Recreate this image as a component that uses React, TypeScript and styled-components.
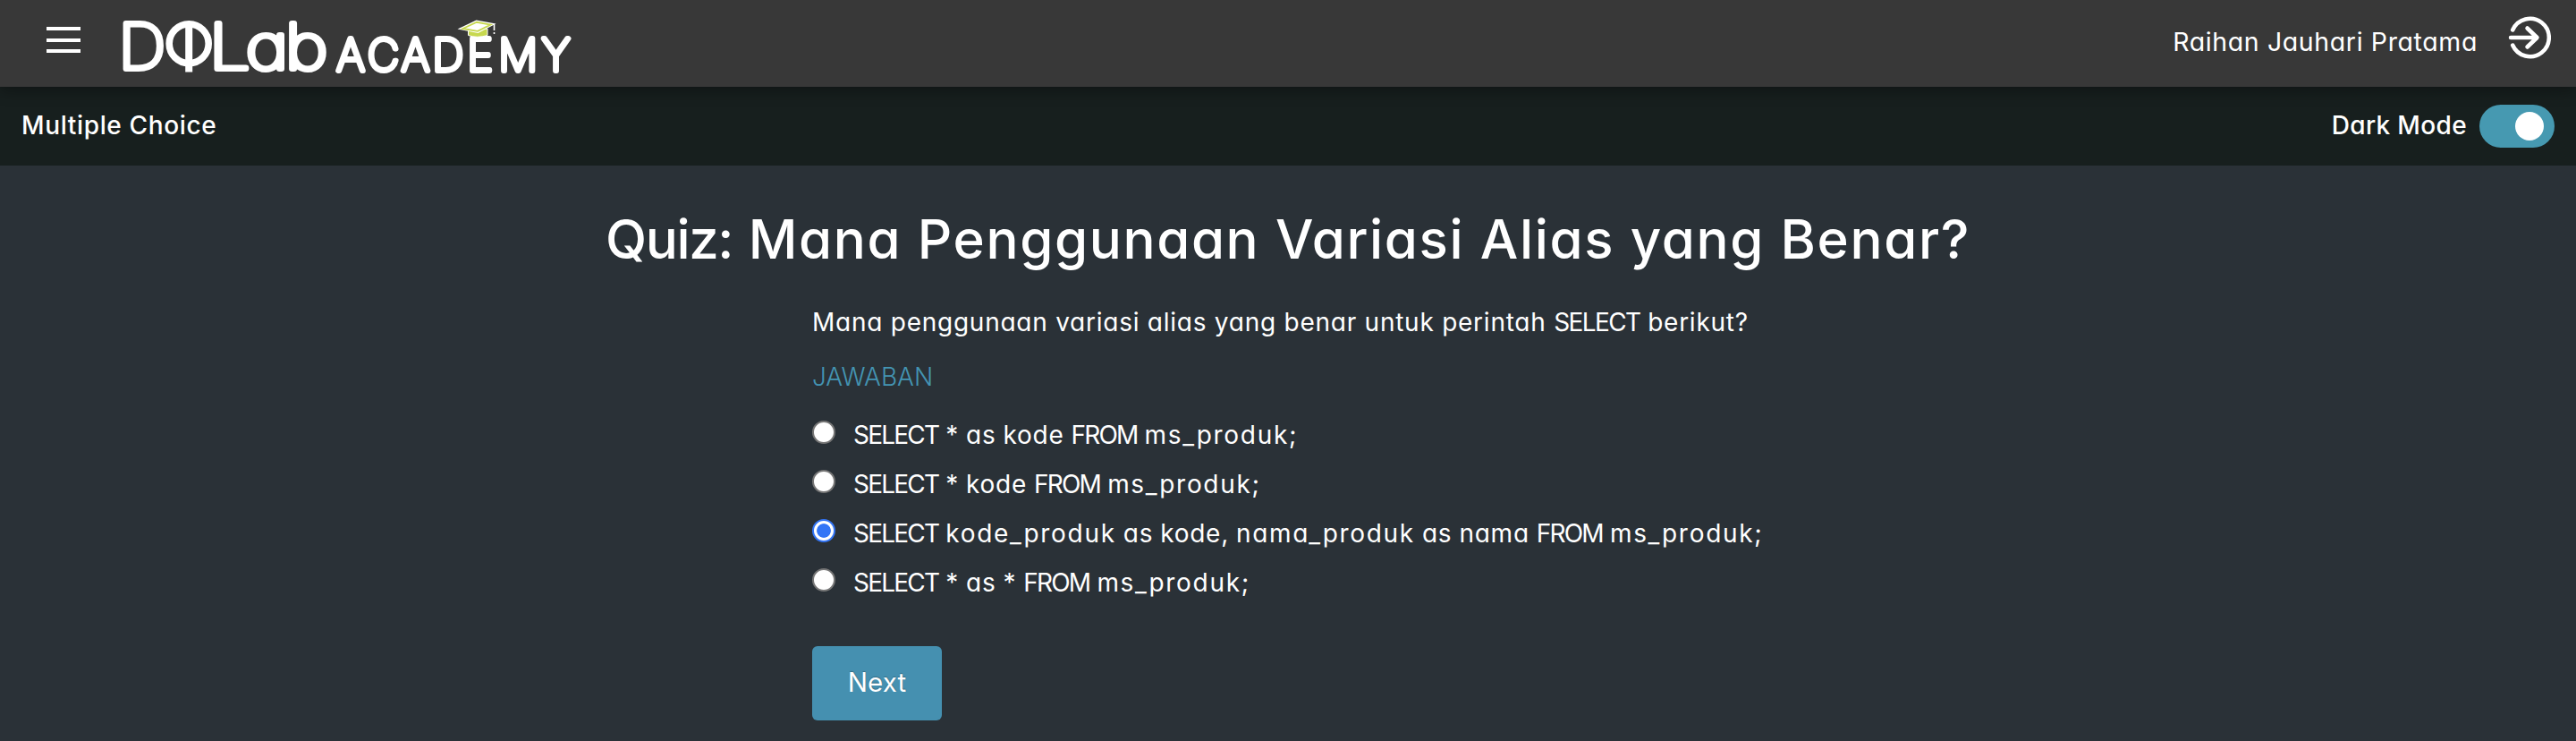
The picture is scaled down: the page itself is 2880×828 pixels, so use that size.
import React, { useState } from "react";
import styled, { createGlobalStyle } from "styled-components";

const GlobalStyle = createGlobalStyle`
  * { box-sizing: border-box; }
  body {
    margin: 0;
    background: #2a3137;
    color: #fff;
    font-family: Inter, "Open Sans", sans-serif;
    font-feature-settings: "cv11" 1;
    font-optical-sizing: none;
    font-size: 28px;
  }
`;

const Page = styled.div`
  display: flex;
  flex-direction: column;
  min-height: 828px;
`;

const Header = styled.header`
  position: relative;
  z-index: 1;
  display: flex;
  align-items: center;
  height: 97px;
  padding: 0 28px 0 52px;
  background: #383838;
  box-shadow: 0 4px 16px rgba(0, 0, 0, 0.35);
`;

const MenuButton = styled.button`
  display: flex;
  flex-direction: column;
  gap: 8.5px;
  width: 38px;
  margin: 0 38px 8px 0;
  padding: 0;
  border: 0;
  background: none;
`;

const MenuBar = styled.span`
  height: 4px;
  background: #fff;
`;

const Logo = styled.svg`
  display: block;
  width: 514px;
  height: 97px;
  font-optical-sizing: auto;
`;

const UserName = styled.span`
  margin-left: auto;
  padding-bottom: 5px;
  font-size: 28.5px;
  letter-spacing: 0.62px;
  white-space: nowrap;
`;

const LogoutIcon = styled.svg`
  display: block;
  width: 48px;
  height: 48px;
  margin: 0 0 13px 34px;
`;

const SubHeader = styled.div`
  display: flex;
  align-items: center;
  justify-content: space-between;
  height: 88px;
  padding: 0 24px;
  background: #171f1e;
  font-weight: 530;
`;

const BarLabel = styled.span<{ $spacing: number }>`
  padding-bottom: 2px;
  letter-spacing: ${(p) => p.$spacing}px;
  white-space: nowrap;
`;

const ModeSwitch = styled.div`
  display: flex;
  align-items: center;
  gap: 14px;
`;

const Toggle = styled.button<{ $on: boolean }>`
  display: flex;
  align-items: center;
  justify-content: ${(p) => (p.$on ? "flex-end" : "flex-start")};
  width: 84px;
  height: 48px;
  padding: 0 12px;
  border: 0;
  border-radius: 24px;
  background: #4699b1;
`;

const Thumb = styled.span`
  width: 32px;
  height: 32px;
  border-radius: 50%;
  background: #fff;
`;

const Main = styled.main`
  display: flex;
  flex-direction: column;
  align-items: center;
  padding-top: 37px;
`;

const Title = styled.h1`
  margin: 0 0 27px;
  font-size: 60px;
  font-weight: 540;
  line-height: 90px;
  letter-spacing: 1.62px;
  white-space: nowrap;
`;

const Quiz = styled.section`
  display: flex;
  flex-direction: column;
  align-items: flex-start;
  width: 1064px;
`;

const Question = styled.p`
  margin: 0 0 19px;
  line-height: 42px;
  letter-spacing: 0.75px;
  white-space: nowrap;
`;

const AnswerHeading = styled.h2`
  margin: 0 0 16px;
  color: #4495b3;
  font-size: 28px;
  font-weight: 340;
  line-height: 42px;
  letter-spacing: 0;
`;

const Option = styled.label`
  display: flex;
  align-items: center;
  height: 55px;
`;

const Radio = styled.input`
  appearance: none;
  width: 26px;
  height: 26px;
  margin: 0 20px 5px 0;
  border: 2px solid #767676;
  border-radius: 50%;
  background: #fff;

  &:checked {
    border-color: #3375f6;
    background: radial-gradient(circle, #3375f6 7.4px, #fff 8.2px);
  }
`;

const OptionText = styled.span`
  letter-spacing: 0.75px;
  word-spacing: -0.6px;
  white-space: nowrap;
`;

const Word = styled.span<{ $spacing: number }>`
  letter-spacing: ${(p) => p.$spacing}px;
`;

const NextButton = styled.button`
  width: 145px;
  height: 83px;
  margin-top: 44px;
  padding: 0 0 3px;
  border: 0;
  border-radius: 6px;
  background: #4590b0;
  color: #fff;
  font: inherit;
  font-feature-settings: inherit;
  font-size: 29.5px;
  letter-spacing: 0.1px;
  text-shadow: 0 -1px 1px rgba(0, 0, 0, 0.25);
`;

const options = [
  "SELECT * as kode FROM ms_produk;",
  "SELECT * kode FROM ms_produk;",
  "SELECT kode_produk as kode, nama_produk as nama FROM ms_produk;",
  "SELECT * as * FROM ms_produk;",
];

// SQL keywords are set tight, identifiers with underscores are set wide.
function Sql({ text }: { text: string }) {
  return (
    <>
      {text.split(/(SELECT|FROM|\w+_\w+;?)/).map((part, i) => {
        if (/^(SELECT|FROM)$/.test(part)) return <Word key={i} $spacing={-1.8}>{part}</Word>;
        if (part.includes("_")) return <Word key={i} $spacing={1.7}>{part}</Word>;
        return part;
      })}
    </>
  );
}

function AcademyLogo() {
  return (
    <Logo viewBox="128 0 514 97" aria-label="DQLab Academy">
      <g fill="#fff" stroke="#fff" strokeLinejoin="round" strokeLinecap="round" fontWeight="100">
        <g strokeWidth="6" fontSize="69.5">
          <text transform="translate(132.6 77.3) scale(1.06 1)">D</text>
          <text transform="translate(233.7 77.3) scale(1.18 1)" x="0 34.8 72">Lab</text>
        </g>
        <text x="376.5 411 449 483.5 522.5 557.5 606" y="78.6" fontSize="48.5" strokeWidth="5.8">
          ACADEMY
        </text>
      </g>
      <ellipse cx="211.2" cy="48.8" rx="22" ry="21.9" fill="none" stroke="#fff" strokeWidth="7.6" />
      <rect x="207.2" y="27" width="8" height="53.5" fill="#fff" />
      <path d="M523.5 34v5.5q9.5 3.5 21.5 0V32z" fill="#c7d84f" stroke="#fff" strokeWidth="1" />
      <path d="M511.5 32.5L532.5 22.5L554.5 26.5L534.5 37z" fill="#fff" />
      <path d="M517.5 32L533 24.8L548.5 27.6L534 34.8z" fill="#fff" stroke="#c7d84f" strokeWidth="1.8" />
      <path d="M552.5 27v7M552.5 36v2" stroke="#fff" strokeWidth="1.6" />
    </Logo>
  );
}

export default function App() {
  const [selected, setSelected] = useState(2);
  const [dark, setDark] = useState(true);

  return (
    <Page>
      <GlobalStyle />
      <Header>
        <MenuButton aria-label="Menu">
          <MenuBar />
          <MenuBar />
          <MenuBar />
        </MenuButton>
        <AcademyLogo />
        <UserName>Raihan Jauhari Pratama</UserName>
        <LogoutIcon viewBox="0 0 48 48" fill="none" stroke="#fff" strokeWidth="4.5" strokeLinecap="round" strokeLinejoin="round">
          <path d="M5.2 15.5A21.2 21.2 0 1 1 5.2 32.5" />
          <path d="M3 24H32M21.5 13.5L32.5 24L21.5 34.5" />
        </LogoutIcon>
      </Header>
      <SubHeader>
        <BarLabel $spacing={0.65}>Multiple Choice</BarLabel>
        <ModeSwitch>
          <BarLabel $spacing={0.35}>Dark Mode</BarLabel>
          <Toggle $on={dark} onClick={() => setDark(!dark)} aria-label="Dark Mode">
            <Thumb />
          </Toggle>
        </ModeSwitch>
      </SubHeader>
      <Main>
        <Title>
          <Word $spacing={-1.4}>Quiz:</Word> Mana Penggunaan Variasi Alias yang Benar?
        </Title>
        <Quiz>
          <Question>
            Mana penggunaan variasi alias yang benar untuk perintah <Word $spacing={-1.6}>SELECT</Word> berikut?
          </Question>
          <AnswerHeading>JAWABAN</AnswerHeading>
          {options.map((option, i) => (
            <Option key={option}>
              <Radio type="radio" name="answer" checked={selected === i} onChange={() => setSelected(i)} />
              <OptionText>
                <Sql text={option} />
              </OptionText>
            </Option>
          ))}
          <NextButton>Next</NextButton>
        </Quiz>
      </Main>
    </Page>
  );
}
